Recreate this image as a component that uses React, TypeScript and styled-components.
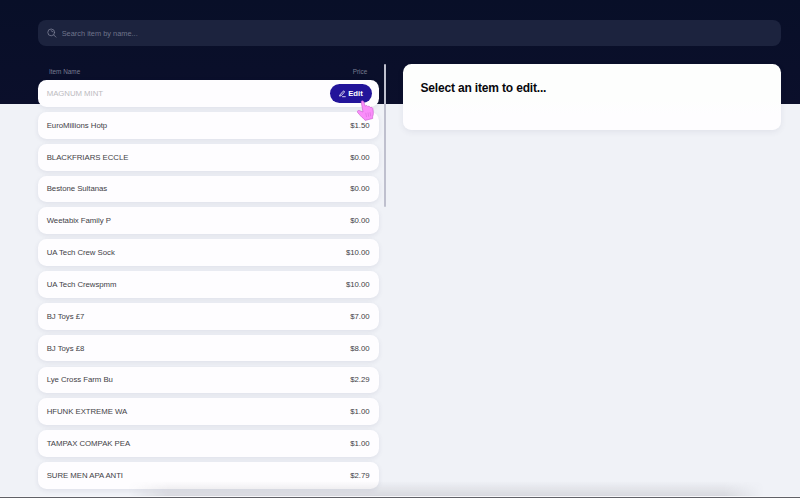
import React from "react";
import styled, { createGlobalStyle } from "styled-components";

const GlobalStyle = createGlobalStyle`
  * { box-sizing: border-box; }
  body {
    margin: 0;
    overflow: hidden;
    font-family: "Liberation Sans", Arial, sans-serif;
    -webkit-font-smoothing: antialiased;
  }
`;

const Page = styled.main`
  position: relative;
  display: flex;
  flex-direction: column;
  width: 800px;
  height: 498px;
  overflow: hidden;
  padding: 20.3px 19.3px 0 38px;
  background: linear-gradient(#080f28 0, #0b0f2b 104px, #f0f2f7 104px);
`;

const SearchBar = styled.label`
  display: flex;
  flex: none;
  align-items: center;
  gap: 5px;
  height: 25.4px;
  padding: 0 9.2px;
  border-radius: 8px;
  background: #1c233e;
  color: #777b91;
`;

const SearchInput = styled.input`
  flex: 1;
  height: 12px;
  border: 0;
  padding: 1px 0 0;
  outline: 0;
  background: transparent;
  font: 7.4px "Liberation Sans", Arial, sans-serif;
  color: inherit;
  &::placeholder { color: #6f748b; opacity: 1; }
`;

const Columns = styled.div`
  display: grid;
  flex: none;
  grid-template-columns: 340.5px 2px 1fr;
  column-gap: 5px;
  align-items: start;
  margin-top: 18px;
`;

const ListHeader = styled.div`
  display: flex;
  justify-content: space-between;
  height: 16.5px;
  padding: 4.4px 11.3px 0 11px;
  font-size: 6.4px;
  line-height: 8px;
  color: #777b91;
`;

const ItemList = styled.ul`
  display: flex;
  flex-direction: column;
  gap: 5.13px;
  margin: 0;
  padding: 0;
  list-style: none;
`;

const ItemRow = styled.li<{ $active?: boolean }>`
  position: relative;
  display: flex;
  align-items: center;
  justify-content: space-between;
  height: 26.7px;
  padding: 0 ${(p) => (p.$active ? 7 : 9)}px 0 8.7px;
  border-radius: 8.5px;
  background: #fefdff;
  box-shadow: 0 1.5px 5px rgba(45, 45, 90, 0.09);
  font-size: 7.8px;
  letter-spacing: -0.04px;
  line-height: 10px;
  color: ${(p) => (p.$active ? "#bcbbc0" : "#424146")};
`;

const Label = styled.span`
  padding-top: 1px;
`;

const EditButton = styled.button`
  display: flex;
  align-items: center;
  justify-content: center;
  gap: 2.5px;
  width: 41.5px;
  height: 18.6px;
  padding: 0;
  border: 0;
  border-radius: 10px;
  background: #23149a;
  color: #fff;
  font: bold 7.7px "Liberation Sans", Arial, sans-serif;
`;

const Pointer = styled.svg`
  position: absolute;
  left: 318.5px;
  top: 20px;
  z-index: 2;
`;

const ScrollThumb = styled.div`
  height: 143.5px;
  width: 2px;
  border-radius: 1px;
  background: #bfc0ce;
`;

const EditorCard = styled.section`
  height: 66px;
  margin-left: 12.5px;
  padding: 17px 17.5px;
  border-radius: 8.5px;
  background: linear-gradient(#fdfefd 55%, #fefdff 75%);
  box-shadow: 0 2px 6px rgba(45, 45, 90, 0.08);
`;

const EditorTitle = styled.h1`
  margin: 0;
  font-size: 12px;
  letter-spacing: -0.17px;
  line-height: 14px;
  color: #08080d;
`;

const BottomEdge = styled.div`
  position: absolute;
  left: 0;
  right: 0;
  bottom: 0;
  height: 2px;
  border-bottom: 1px solid #606167;
  background: #f7f7fa;
`;

const BottomShade = styled.div`
  position: absolute;
  left: 128px;
  right: 36px;
  bottom: 2px;
  height: 15px;
  background: linear-gradient(transparent, rgba(70, 68, 78, 0.14));
  mask-image: linear-gradient(90deg, transparent, #000 40px, #000 calc(100% - 40px), transparent);
`;

const items: [string, string][] = [
  ["MAGNUM MINT", ""],
  ["EuroMillions Hotp", "$1.50"],
  ["BLACKFRIARS ECCLE", "$0.00"],
  ["Bestone Sultanas", "$0.00"],
  ["Weetabix Family P", "$0.00"],
  ["UA Tech Crew Sock", "$10.00"],
  ["UA Tech Crewspmm", "$10.00"],
  ["BJ Toys £7", "$7.00"],
  ["BJ Toys £8", "$8.00"],
  ["Lye Cross Farm Bu", "$2.29"],
  ["HFUNK EXTREME WA", "$1.00"],
  ["TAMPAX COMPAK PEA", "$1.00"],
  ["SURE MEN APA ANTI", "$2.79"],
];

const SearchIcon = () => (
  <svg width="9.5" height="10" viewBox="0 0 9.5 10" fill="none" stroke="currentColor" strokeWidth="0.85" strokeLinecap="round">
    <circle cx="4.2" cy="4.4" r="3.4" />
    <path d="M6.7 6.9 8.9 9.1M4.2 2.7a1.7 1.7 0 0 1 1.6 1.2" />
  </svg>
);

const PencilIcon = () => (
  <svg width="7" height="8" viewBox="0 0 7 8" fill="none" stroke="currentColor" strokeWidth="0.8" strokeLinecap="round" strokeLinejoin="round">
    <path d="M1.1 4.7 4.2 1.2q.5-.4 1 0t.1 1L2.3 5.6 1 6ZM3.5 6.7h2.8" />
  </svg>
);

const HandPointer = () => (
  <Pointer width="18" height="21" viewBox="0 0 18 21">
    <path
      d="M4.2 2C4 .5 6.3.3 6.800 1.800L8.200 6.200l.2-.3c.6-.7 1.700-.5 2.100.2l.4.500c.7-.7 1.900-.4 2.200.5l.5.400c1-.5 2.200.3 2.300 1.400.4 2.600.9 5.400-.3 7.800l.1 1.800-7.600 1.900-1.300-1.700C4.300 17.200 2.700 14.700.6 12.500c-1-1.300.8-2.700 2.300-1.700L6 12Z"
      fill="#fa8dfa"
      stroke="#c45dca"
      strokeWidth="0.6"
      strokeLinejoin="round"
    />
    <path d="m8.800 13.200.7 3.500m1.500-3.800.7 3.500m1.400-3.800.5 3.200" fill="none" stroke="#cf68d3" strokeWidth="0.5" strokeLinecap="round" />
  </Pointer>
);

export default function App() {
  return (
    <>
      <GlobalStyle />
      <Page>
        <SearchBar>
          <SearchIcon />
          <SearchInput placeholder="Search item by name..." />
        </SearchBar>
        <Columns>
          <section>
            <ListHeader>
              <span>Item Name</span>
              <span>Price</span>
            </ListHeader>
            <ItemList>
              {items.map(([name, price], i) => (
                <ItemRow key={name} $active={i === 0}>
                  <Label>{name}</Label>
                  {i === 0 ? (
                    <>
                      <EditButton>
                        <PencilIcon />
                        Edit
                      </EditButton>
                      <HandPointer />
                    </>
                  ) : (
                    <Label>{price}</Label>
                  )}
                </ItemRow>
              ))}
            </ItemList>
          </section>
          <ScrollThumb />
          <EditorCard>
            <EditorTitle>Select an item to edit...</EditorTitle>
          </EditorCard>
        </Columns>
        <BottomShade />
        <BottomEdge />
      </Page>
    </>
  );
}
